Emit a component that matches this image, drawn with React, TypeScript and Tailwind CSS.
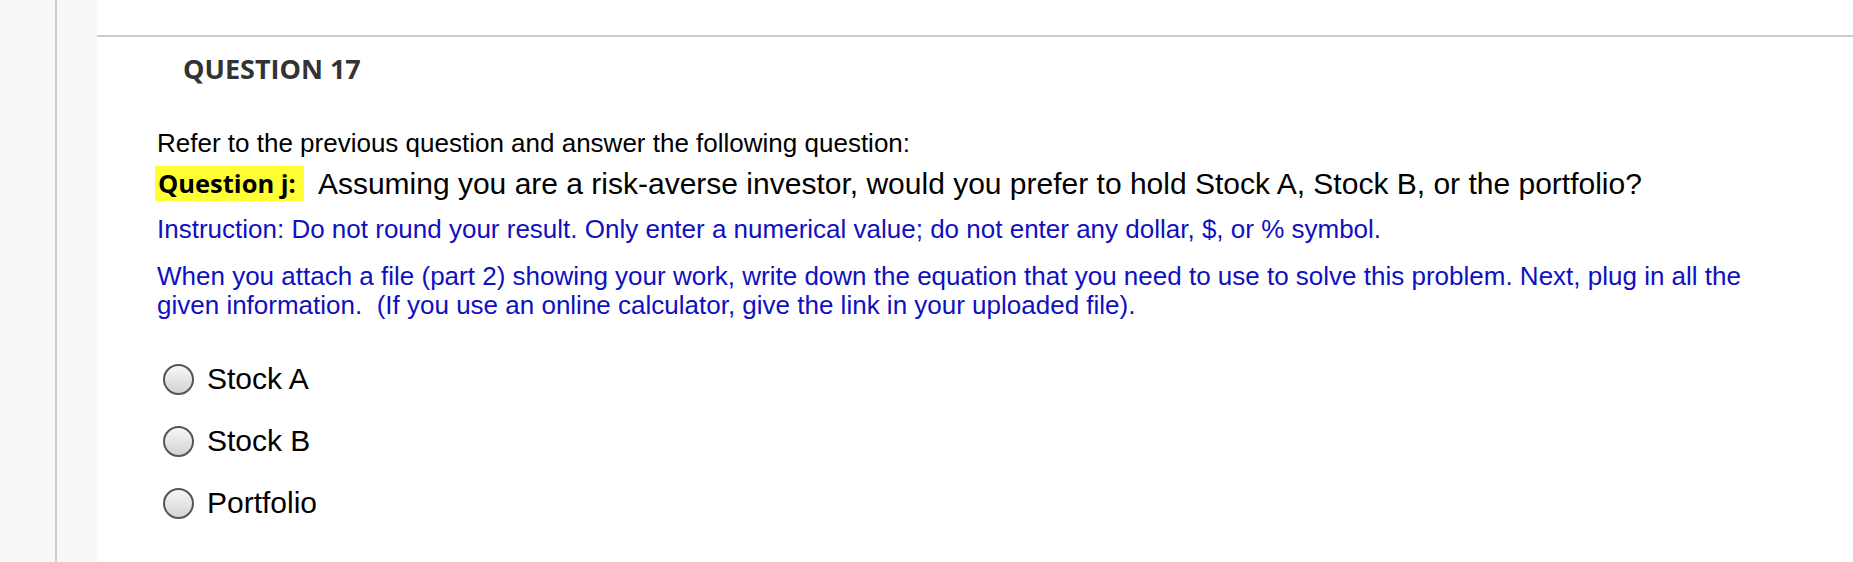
export default function App() {
  const options = ["Stock A", "Stock B", "Portfolio"];
  return (
    <div className="flex min-h-[562px] w-full bg-white">
      {/* left rail */}
      <div className="flex w-[97px] shrink-0 bg-[#f8f8f8]">
        <div className="w-[55px]" />
        <div className="w-[2px] bg-[#cfcfcf]" />
      </div>

      <div className="flex-1">
        <div className="h-[35px]" />
        <div className="h-[2px] bg-[#cccccc]" />

        <h2
          className="pl-[86px] pt-[14px] text-[27px] font-bold leading-[36px] text-[#333333]"
          style={{ fontFamily: '"Open Sans", sans-serif' }}
        >
          QUESTION 17
        </h2>

        <div className="pl-[60px] pt-[41px]" style={{ fontFamily: '"Liberation Sans", Arial, sans-serif' }}>
          <p className="text-[26px] leading-[30px] text-black">
            Refer to the previous question and answer the following question:
          </p>

          <p className="mt-[8px] flex items-center text-[30px] leading-[35px] text-black">
            <span
              className="ml-[-2px] bg-[#ffff33] pl-[3px] pr-[8px] text-[25.5px] font-bold"
              style={{ fontFamily: '"Open Sans", sans-serif' }}
            >
              Question j:
            </span>
            <span className="ml-[14px]">
              Assuming you are a risk-averse investor, would you prefer to hold Stock A, Stock B, or the portfolio?
            </span>
          </p>

          <p className="mt-[13px] text-[26px] leading-[30px] text-[#1010c0]">
            Instruction: Do not round your result. Only enter a numerical value; do not enter any dollar, $, or % symbol.
          </p>

          <p className="mt-[18px] w-[1630px] text-[26px] leading-[29px] text-[#1010c0]">
            When you attach a file (part 2) showing your work, write down the equation that you need to use to solve this problem. Next, plug in all the given information.&nbsp; (If you use an online calculator, give the link in your uploaded file).
          </p>

          <div className="mt-[43px] flex flex-col gap-[30px] pl-[6px]">
            {options.map((o) => (
              <label key={o} className="flex items-center gap-[13px] text-[30px] leading-[32px] text-black">
                <span className="h-[31px] w-[31px] shrink-0 rounded-full border-2 border-[#555555] bg-linear-to-b from-[#f7f7f7] to-[#d3d3d3]" />
                {o}
              </label>
            ))}
          </div>
        </div>
      </div>
    </div>
  );
}
